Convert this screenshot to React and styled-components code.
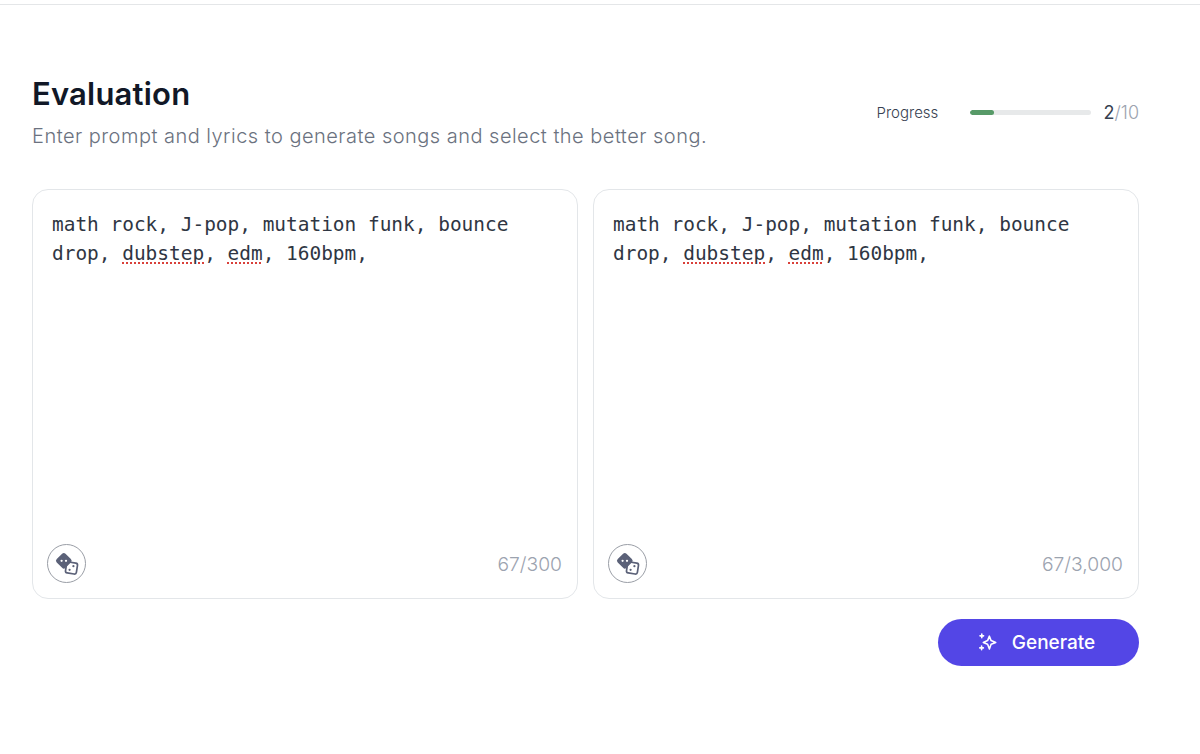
import React from "react";
import styled, { createGlobalStyle } from "styled-components";

const GlobalStyle = createGlobalStyle`
  html, body {
    margin: 0;
    padding: 0;
    background: #ffffff;
    font-family: Inter, "Liberation Sans", sans-serif;
  }
`;

const DiceIcon = () => (
  <svg width="24" height="24" viewBox="0 0 24 24">
    <rect x="11" y="10.5" width="11" height="11" rx="2" fill="#ffffff" stroke="#5b6178" strokeWidth="1.7" transform="rotate(9 16.5 16)" />
    <circle cx="14.6" cy="17.8" r="1.1" fill="#5b6178" />
    <circle cx="18.4" cy="14.2" r="1.1" fill="#5b6178" />
    <rect x="2.6" y="2.6" width="12.4" height="12.4" rx="2.4" fill="#5b6178" transform="rotate(45 8.8 8.8)" />
    <circle cx="6.6" cy="8.8" r="1.15" fill="#ffffff" />
    <circle cx="11" cy="8.8" r="1.15" fill="#ffffff" />
  </svg>
);

const SparkleIcon = () => (
  <svg width="19" height="19" viewBox="0 0 18 18" fill="none" stroke="#ffffff" strokeWidth="1.5" strokeLinejoin="round" strokeLinecap="round">
    <path d="M10.8 3 L12.4 7.2 L16.8 8.9 L12.4 10.6 L10.8 15.2 L9.1 10.6 L5 8.9 L9.1 7.2 Z" />
    <path d="M3.6 1 V4.4 M1.9 2.7 H5.3" />
    <path d="M3.4 12.4 V15.8 M1.7 14.1 H5.1" />
  </svg>
);

const Page = styled.div`
  box-sizing: border-box;
  width: 1200px;
  height: 754px;
  border-top: 1px solid #e4e6e8;
  margin-top: 4px;
  padding: 69px 61px 0 32px;
`;

const Header = styled.header`
  display: flex;
  justify-content: space-between;
  align-items: flex-start;
  height: 115px;
`;

const Title = styled.h1`
  margin: 0;
  font-size: 31px;
  line-height: 40px;
  font-weight: 600;
  letter-spacing: 0.2px;
  color: #111827;
`;

const Subtitle = styled.p`
  margin: 8px 0 0;
  font-size: 20px;
  line-height: 28px;
  font-weight: 300;
  letter-spacing: 0.48px;
  color: #6b7280;
`;

const Progress = styled.div`
  display: flex;
  align-items: center;
  height: 28px;
  margin-top: 24px;
`;

const ProgressLabel = styled.span`
  width: 93px;
  font-size: 15px;
  font-weight: 300;
  color: #374151;
`;

const Track = styled.div`
  width: 121px;
  height: 5px;
  border-radius: 3px;
  background: #e7e9ea;
  overflow: hidden;
`;

const Fill = styled.div`
  height: 100%;
  border-radius: 3px;
  background: #579a68;
`;

const Count = styled.span`
  margin-left: 13px;
  font-size: 18px;
  font-weight: 300;
  color: #9ca3af;

  b {
    font-weight: 400;
    color: #374151;
  }
`;

const Editors = styled.div`
  display: grid;
  grid-template-columns: 546px 546px;
  gap: 15px;
`;

const Card = styled.div`
  box-sizing: border-box;
  height: 410px;
  padding: 20px 15px 15px 19px;
  display: flex;
  flex-direction: column;
  justify-content: space-between;
  border: 1px solid #e3e6e9;
  border-radius: 16px;
  background: #ffffff;
`;

const Prompt = styled.div`
  font-family: "DejaVu Sans Mono", "Liberation Mono", monospace;
  font-size: 19.45px;
  line-height: 29px;
  color: #2f3643;
`;

const Misspelled = styled.span`
  text-decoration: underline dotted #d9403a 1.5px;
  text-underline-offset: 2px;
`;

const CardFooter = styled.div`
  display: flex;
  justify-content: space-between;
  align-items: center;
  margin-left: -5px;
`;

const DiceButton = styled.button`
  width: 39px;
  height: 39px;
  padding: 0;
  display: flex;
  align-items: center;
  justify-content: center;
  border: 1px solid #9a9ea6;
  border-radius: 50%;
  background: #ffffff;
`;

const Counter = styled.span`
  font-size: 19.3px;
  font-weight: 300;
  color: #9ca3af;
`;

const Actions = styled.div`
  display: flex;
  justify-content: flex-end;
  margin-top: 20px;
`;

const GenerateButton = styled.button`
  width: 201px;
  height: 47px;
  display: flex;
  align-items: center;
  justify-content: center;
  gap: 15px;
  padding: 0 4px 0 0;
  border: 0;
  border-radius: 24px;
  background: #5346e6;
  color: #ffffff;
  font-family: Inter, sans-serif;
  font-size: 19px;
  font-weight: 500;
`;

const editors = ["67/300", "67/3,000"];

export default function App() {
  return (
    <>
      <GlobalStyle />
      <Page>
        <Header>
          <div>
            <Title>Evaluation</Title>
            <Subtitle>Enter prompt and lyrics to generate songs and select the better song.</Subtitle>
          </div>
          <Progress>
            <ProgressLabel>Progress</ProgressLabel>
            <Track>
              <Fill style={{ width: `${(2 / 10) * 100}%` }} />
            </Track>
            <Count>
              <b>2</b>/10
            </Count>
          </Progress>
        </Header>
        <Editors>
          {editors.map((count) => (
            <Card key={count}>
              <Prompt>
                math rock, J-pop, mutation funk, bounce
                <br />
                drop, <Misspelled>dubstep</Misspelled>, <Misspelled>edm</Misspelled>, 160bpm,
              </Prompt>
              <CardFooter>
                <DiceButton>
                  <DiceIcon />
                </DiceButton>
                <Counter>{count}</Counter>
              </CardFooter>
            </Card>
          ))}
        </Editors>
        <Actions>
          <GenerateButton>
            <SparkleIcon />
            Generate
          </GenerateButton>
        </Actions>
      </Page>
    </>
  );
}
